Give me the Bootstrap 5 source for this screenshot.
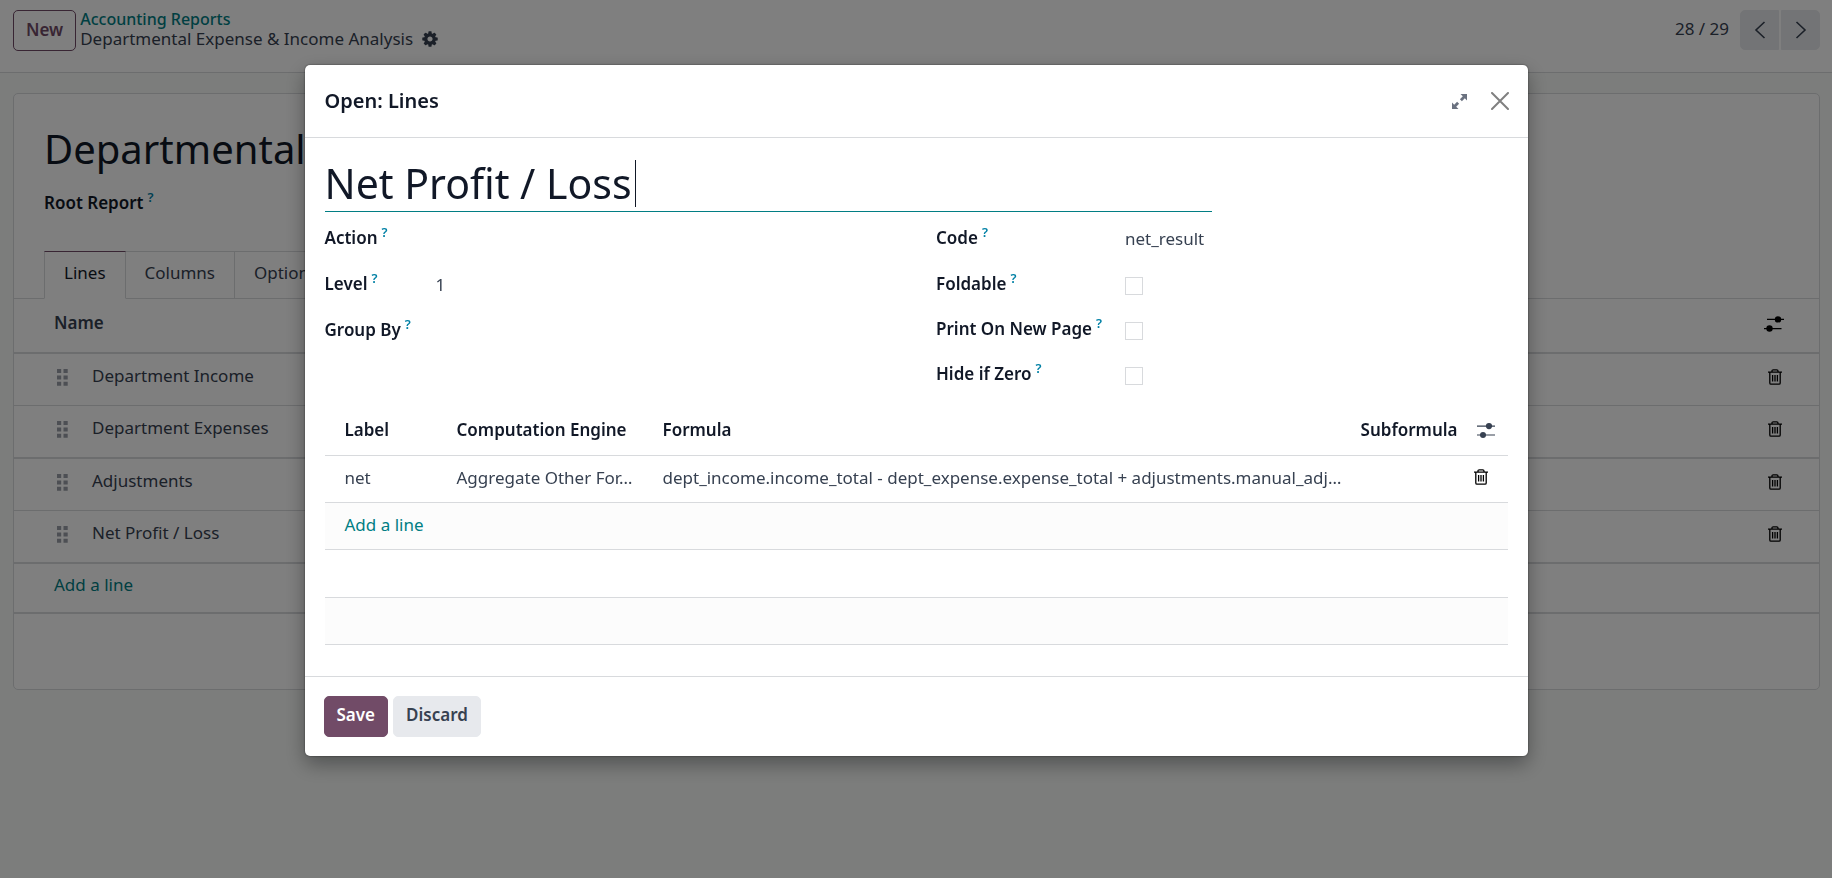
<!DOCTYPE html>
<html lang="en">
<head>
<meta charset="utf-8">
<meta name="viewport" content="width=device-width, initial-scale=1">
<title>Departmental Expense &amp; Income Analysis</title>
<link href="https://cdn.jsdelivr.net/npm/bootstrap@5.3.0/dist/css/bootstrap.min.css" rel="stylesheet">
<style>
  :root { --ink: #111827; --text: #374151; --line: #d8dadd; --teal: #017e84; --plum: #714b67; }
  body { font-family: "Noto Sans", sans-serif; font-size: 17px; line-height: 24px; color: var(--text); background: #f8fbf9; }
  a { color: var(--teal); text-decoration: none; }
  svg { display: block; fill: currentColor; }
  label, th { font-weight: 600; }
  .help-mark { color: #0180a5; font-size: 13px; top: -7px; margin-left: 4px; font-weight: 600; }
  .btn { --bs-btn-font-size: 17px; --bs-btn-line-height: 24px; --bs-btn-border-radius: 5px; --bs-btn-font-weight: 600; height: 41px; padding: 6px 12px 8px; }
  .btn-plum { --bs-btn-bg: var(--plum); --bs-btn-border-color: var(--plum); --bs-btn-color: #fff; }
  .btn-plum-outline { --bs-btn-border-color: var(--plum); --bs-btn-color: var(--plum); }
  .btn-soft { --bs-btn-bg: #e7e9ed; --bs-btn-border-color: #e7e9ed; --bs-btn-color: var(--text); }
  .btn-bare { border: 0; padding: 0; background: none; color: inherit; }

  .control-bar { height: 73px; padding: 10px 12px 0 13px; border-bottom: 1px solid var(--line); background: #fff; }
  .crumbs { line-height: 20px; margin: -1px 0 0 4px; }
  .crumbs a { font-size: 16px; font-weight: 500; }
  .pager .counter { margin-right: 11px; padding-bottom: 2px; }
  .pager .btn { width: 39px; height: 40px; padding: 0; display: grid; place-items: center; }
  .pager .btn + .btn { margin-left: 2px; }

  .sheet { margin: 20px 12px 0 13px; border: 1px solid var(--line); border-radius: 5px; background: #fff; padding-bottom: 75px; }
  .sheet-head { padding: 29px 30px 0; height: 157px; }
  .sheet-head label { color: var(--ink); margin-top: 16px; }
  .record-title { font-size: 41px; line-height: 52px; color: var(--ink); font-weight: 400; }
  .sheet .record-title { font-size: 40px; }
  .sheet .nav-tabs { padding-left: 30px; --bs-nav-tabs-border-color: var(--line); --bs-nav-tabs-border-width: 1px; }
  .sheet .nav-link { height: 48px; padding: 9px 19px; color: var(--text); border: 1px solid var(--line); border-left-width: 0; border-radius: 0; }
  .sheet .nav-link.active { color: var(--ink); border-color: var(--plum) var(--line) #fff; border-left-width: 1px; }

  .grid { width: 100%; color: var(--text); }
  .grid th { color: var(--ink); }
  .lines-grid th { color: var(--text); }
  .lines-grid tr { height: 53px; border-bottom: 2px solid var(--line); }
  .lines-grid thead tr { height: 54px; }
  .lines-grid tbody tr:nth-child(odd) { height: 52px; border-bottom-width: 1px; }
  .lines-grid tbody tr:last-child { height: 50px; border-bottom-width: 2px; }
  .lines-grid td, .lines-grid th { padding: 0 0 7px; }
  .lines-grid th { padding-bottom: 5px; }
  .lines-grid .first-col { padding-left: 40px; width: 78px; }
  .lines-grid .last-col { width: 55px; padding: 0; }
  .lines-grid th.last-col { padding-bottom: 3px; }
  .grip { color: #9a9fa8; margin: 4px 0 0 3px; }

  .modal { --bs-modal-width: 1223px; }
  .modal-dialog { margin: 65px auto 0; max-width: var(--bs-modal-width); }
  .modal-content { border: 0; border-radius: 5px; box-shadow: 0 8px 20px rgba(0,0,0,.35), 0 0 2px rgba(0,0,0,.6); color: var(--text); }
  .modal-header { height: 73px; padding: 0 19px 0 20px; border-color: var(--line); }
  .modal-title { font-size: 20px; line-height: 28px; color: var(--ink); font-weight: 600; }
  .modal-body { padding: 18px 20px 31px; }
  .modal-footer { justify-content: flex-start; padding: 19px; gap: 5px; border-color: var(--line); }
  .modal-footer > * { margin: 0; }
  .title-field { width: 75%; border-bottom: 1px solid var(--teal); height: 56px; }
  .title-field input { width: 310px; padding: 0 0 2px; border: 0; outline: 0; background: none; }
  .caret { width: 1px; height: 47px; background: var(--ink); }

  .fields { gap: 40px; display: grid; grid-template-columns: 1fr 1fr; }
  .field-col { display: grid; align-content: start; }
  .field-left { grid-template-columns: 111px 1fr; grid-auto-rows: 46px; }
  .field-right { grid-template-columns: 189px 1fr; grid-template-rows: 46px; grid-auto-rows: 45px; }
  .field-col label { color: var(--ink); padding-top: 14px; white-space: nowrap; }
  .field-col input[type=text] { border: 0; padding: 0; margin-top: 15px; height: 24px; width: 100%; color: var(--text); background: none; outline: 0; }
  .field-col .form-check-input { width: 18px; height: 18px; margin: 19px 0 0; border: 1px solid var(--line); border-radius: 0; }

  .expr-grid { table-layout: fixed; margin-top: 9px; }
  .expr-grid tr { height: 47px; border-bottom: 1px solid var(--line); }
  .expr-grid thead tr { height: 53px; }
  .expr-grid tbody tr:nth-child(even) { background: #fcfcfc; }
  .expr-grid tbody tr:nth-child(3) { height: 48px; }
  .expr-grid td { padding: 0 0 2px; }
  .expr-grid th { padding: 3px 0 0; }
  .expr-grid .first-col { padding-left: 20px; }
  .expr-grid .options-col { padding: 4px 0 0 3px; }
</style>
</head>
<body>
<svg width="0" height="0" class="position-absolute" aria-hidden="true">
  <symbol id="trash" viewBox="0 0 14 16"><path fill="none" stroke="currentColor" stroke-width="1.300" d="M0 3.200h14M4 3v-1q0-1.200 1.200-1.200h3.600q1.200 0 1.200 1.200v1M1.800 3.200v10.800q0 1.200 1.200 1.200h8q1.200 0 1.200-1.200v-10.800M4.600 6v6.500M7 6v6.500M9.400 6v6.500"/></symbol>
  <symbol id="sliders" viewBox="0 0 18 15"><path d="M0 2.500h18v1.200H0zM0 11.400h18v1.200H0z"/><circle cx="12" cy="3.100" r="3.100"/><circle cx="6" cy="12" r="3"/></symbol>
  <symbol id="sliders-wide" viewBox="0 0 20 16"><path d="M3 2.800h17v1.300H3zM0 11.900h17.500v1.300H0z"/><circle cx="14" cy="3.400" r="3.200"/><circle cx="5.500" cy="12.500" r="3.200"/></symbol>
  <symbol id="grip" viewBox="0 0 11 17"><path d="M0 0h4.200v4H0zM6.500 0h4.200v4H6.500zM0 6.400h4.200v4H0zM6.500 6.400h4.200v4H6.500zM0 12.800h4.200v4H0zM6.500 12.800h4.200v4H6.500z"/></symbol>
</svg>

<header class="control-bar d-flex align-items-start">
  <button type="button" class="btn btn-plum-outline">New</button>
  <nav class="crumbs" aria-label="Breadcrumb">
    <a href="#" class="d-block">Accounting Reports</a>
    <div class="d-flex align-items-center gap-2">
      <span>Departmental Expense &amp; Income Analysis</span>
      <button type="button" class="btn-bare" aria-label="Actions"><svg width="18" height="18" viewBox="0 0 1792 1792"><path d="M1152 896q0-106-75-181t-181-75-181 75-75 181 75 181 181 75 181-75 75-181zm512-109v222q0 12-8 23t-20 13l-185 28q-19 54-39 91 35 50 107 138 10 12 10 25t-9 23q-27 37-99 108t-94 71q-12 0-26-9l-138-108q-44 23-91 38-16 136-29 186-7 28-36 28h-222q-14 0-24.500-8.500t-11.500-21.500l-28-184q-49-16-90-37l-141 107q-10 9-25 9-14 0-25-11-126-114-165-168-7-10-7-23 0-12 8-23 15-21 51-66.500t54-70.500q-27-50-41-99l-183-27q-13-2-21-12.500t-8-23.500v-222q0-12 8-23t19-13l186-28q14-46 39-92-40-57-107-138-10-12-10-24 0-10 9-23 26-36 98.500-107.500t94.500-71.500q13 0 26 10l138 107q44-23 91-38 16-136 29-186 7-28 36-28h222q14 0 24.500 8.500t11.500 21.500l28 184q49 16 90 37l142-107q9-9 24-9 13 0 25 10 129 119 165 170 7 8 7 22 0 12-8 23-15 21-51 66.500t-54 70.500q26 50 41 98l183 28q13 2 21 12.500t8 23.500z"/></svg></button>
    </div>
  </nav>
  <div class="pager d-flex align-items-center ms-auto">
    <span class="counter">28 / 29</span>
    <button type="button" class="btn btn-soft rounded-end-0" aria-label="Previous"><svg width="12" height="18" viewBox="0 0 12 18"><path fill="none" stroke="currentColor" stroke-width="1.600" d="M10.500 1 2 9l8.500 8"/></svg></button>
    <button type="button" class="btn btn-soft rounded-start-0" aria-label="Next"><svg width="12" height="18" viewBox="0 0 12 18"><path fill="none" stroke="currentColor" stroke-width="1.600" d="M1.500 1 10 9l-8.500 8"/></svg></button>
  </div>
</header>

<main class="sheet">
  <div class="sheet-head">
    <h1 class="record-title mb-0">Departmental</h1>
    <label>Root Report<sup class="help-mark">?</sup></label>
  </div>
  <ul class="nav nav-tabs">
    <li class="nav-item"><a class="nav-link active" href="#">Lines</a></li>
    <li class="nav-item"><a class="nav-link" href="#">Columns</a></li>
    <li class="nav-item"><a class="nav-link" href="#">Options</a></li>
  </ul>
  <table class="grid lines-grid">
    <thead><tr><th class="first-col" colspan="2">Name</th><th class="last-col text-black"><svg width="20" height="16"><use href="#sliders-wide"/></svg></th></tr></thead>
    <tbody>
      <tr><td class="first-col"><svg class="grip" width="11" height="17"><use href="#grip"/></svg></td><td>Department Income</td><td class="last-col"><button class="btn-bare ms-1 text-black" aria-label="Delete"><svg width="14" height="16"><use href="#trash"/></svg></button></td></tr>
      <tr><td class="first-col"><svg class="grip" width="11" height="17"><use href="#grip"/></svg></td><td>Department Expenses</td><td class="last-col"><button class="btn-bare ms-1 text-black" aria-label="Delete"><svg width="14" height="16"><use href="#trash"/></svg></button></td></tr>
      <tr><td class="first-col"><svg class="grip" width="11" height="17"><use href="#grip"/></svg></td><td>Adjustments</td><td class="last-col"><button class="btn-bare ms-1 text-black" aria-label="Delete"><svg width="14" height="16"><use href="#trash"/></svg></button></td></tr>
      <tr><td class="first-col"><svg class="grip" width="11" height="17"><use href="#grip"/></svg></td><td>Net Profit / Loss</td><td class="last-col"><button class="btn-bare ms-1 text-black" aria-label="Delete"><svg width="14" height="16"><use href="#trash"/></svg></button></td></tr>
      <tr><td class="first-col" colspan="3"><a href="#">Add a line</a></td></tr>
    </tbody>
  </table>
</main>

<div class="modal-backdrop show"></div>
<div class="modal d-block" role="dialog" aria-labelledby="dialog-title">
  <div class="modal-dialog">
    <div class="modal-content">
      <div class="modal-header">
        <h2 class="modal-title" id="dialog-title">Open: Lines</h2>
        <div class="d-flex align-items-center gap-4">
          <button type="button" class="btn-bare" aria-label="Expand"><svg width="15" height="15" viewBox="0 0 15 15" color="#6b7280"><path d="M8.500 0H15v6.500l-2.200-2.200-2.900 2.900-2-2 2.900-2.900zM6.500 15H0V8.500l2.200 2.200 2.900-2.900 2 2-2.900 2.900z"/></svg></button>
          <button type="button" class="btn-bare" aria-label="Close"><svg width="18" height="18" viewBox="0 0 18 18" color="#808080"><path fill="none" stroke="currentColor" stroke-width="2" stroke-linecap="round" d="M1 1l16 16M17 1 1 17"/></svg></button>
        </div>
      </div>
      <div class="modal-body">
        <div class="title-field d-flex align-items-center">
          <input type="text" class="record-title" value="Net Profit / Loss" aria-label="Name"><span class="caret"></span>
        </div>
        <div class="fields">
          <div class="field-col field-left">
            <label for="f-action">Action<sup class="help-mark">?</sup></label><input type="text" id="f-action">
            <label for="f-level">Level<sup class="help-mark">?</sup></label><input type="text" id="f-level" value="1">
            <label for="f-group">Group By<sup class="help-mark">?</sup></label><input type="text" id="f-group">
          </div>
          <div class="field-col field-right">
            <label for="f-code">Code<sup class="help-mark">?</sup></label><input type="text" id="f-code" value="net_result">
            <label for="f-fold">Foldable<sup class="help-mark">?</sup></label><input type="checkbox" class="form-check-input" id="f-fold">
            <label for="f-print">Print On New Page<sup class="help-mark">?</sup></label><input type="checkbox" class="form-check-input" id="f-print">
            <label for="f-hide">Hide if Zero<sup class="help-mark">?</sup></label><input type="checkbox" class="form-check-input" id="f-hide">
          </div>
        </div>
        <table class="grid expr-grid">
          <colgroup><col style="width:132px"><col style="width:206px"><col><col style="width:132px"><col style="width:34px"></colgroup>
          <thead><tr><th class="first-col">Label</th><th>Computation Engine</th><th>Formula</th><th class="text-end"><span class="me-3">Subformula</span></th><th class="options-col"><svg width="18" height="15" color="#374151"><use href="#sliders"/></svg></th></tr></thead>
          <tbody>
            <tr><td class="first-col">net</td><td>Aggregate Other For…</td><td class="text-nowrap">dept_income.income_total - dept_expense.expense_total + adjustments.manual_adj…</td><td></td><td><button class="btn-bare text-black pt-1" aria-label="Delete"><svg width="14" height="16"><use href="#trash"/></svg></button></td></tr>
            <tr><td class="first-col" colspan="5"><a href="#">Add a line</a></td></tr>
            <tr><td colspan="5"></td></tr>
            <tr><td colspan="5"></td></tr>
          </tbody>
        </table>
      </div>
      <div class="modal-footer">
        <button type="button" class="btn btn-plum">Save</button>
        <button type="button" class="btn btn-soft">Discard</button>
      </div>
    </div>
  </div>
</div>
<script src="https://cdn.jsdelivr.net/npm/bootstrap@5.3.0/dist/js/bootstrap.bundle.min.js"></script>
</body>
</html>
